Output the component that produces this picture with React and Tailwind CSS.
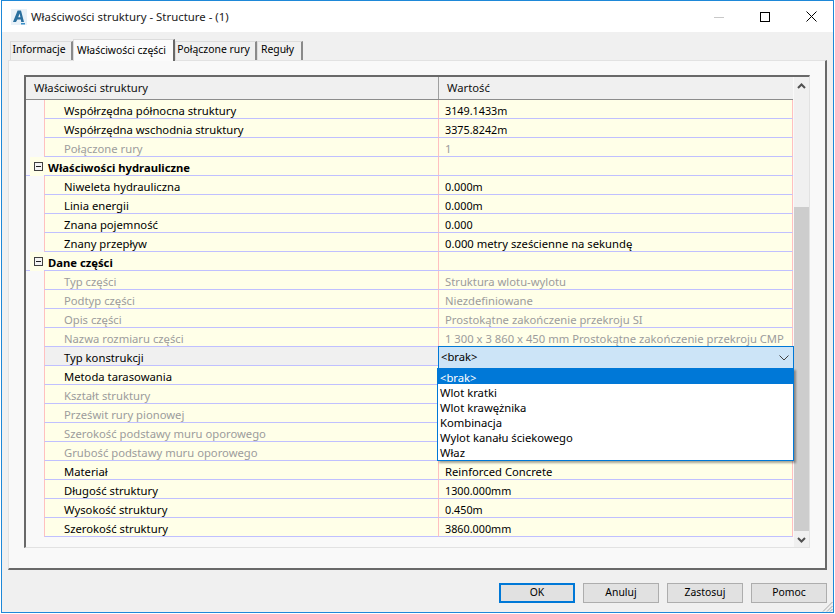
const LABEL_FONT = "font-['Noto_Sans','Open_Sans',sans-serif]";

const rows = [
  { k: "Współrzędna północna struktury", v: "3149.1433m", num: true },
  { k: "Współrzędna wschodnia struktury", v: "3375.8242m", num: true },
  { k: "Połączone rury", v: "1", dim: true },
  { section: "Właściwości hydrauliczne" },
  { k: "Niweleta hydrauliczna", v: "0.000m", num: true },
  { k: "Linia energii", v: "0.000m", num: true },
  { k: "Znana pojemność", v: "0.000", num: true },
  { k: "Znany przepływ", v: "0.000 metry sześcienne na sekundę" },
  { section: "Dane części" },
  { k: "Typ części", v: "Struktura wlotu-wylotu", dim: true },
  { k: "Podtyp części", v: "Niezdefiniowane", dim: true },
  { k: "Opis części", v: "Prostokątne zakończenie przekroju SI", dim: true },
  { k: "Nazwa rozmiaru części", v: "1 300 x 3 860 x 450 mm Prostokątne zakończenie przekroju CMP", dim: true },
  { k: "Typ konstrukcji", v: "", active: true },
  { k: "Metoda tarasowania", v: "" },
  { k: "Kształt struktury", v: "", dim: true },
  { k: "Prześwit rury pionowej", v: "", dim: true },
  { k: "Szerokość podstawy muru oporowego", v: "", dim: true },
  { k: "Grubość podstawy muru oporowego", v: "", dim: true },
  { k: "Materiał", v: "Reinforced Concrete" },
  { k: "Długość struktury", v: "1300.000mm", num: true },
  { k: "Wysokość struktury", v: "0.450m", num: true },
  { k: "Szerokość struktury", v: "3860.000mm", num: true },
];

const options = ["<brak>", "Wlot kratki", "Wlot krawężnika", "Kombinacja", "Wylot kanału ściekowego", "Właz"];

function Row({ r }) {
  if (r.section) {
    return (
      <div className="flex h-[19px] border-b border-[#c0c0ff]">
        <div className="w-[4px] shrink-0" />
        <div className="w-[14px] shrink-0 bg-[#ffffe8] flex items-center justify-end pr-[1px] -mb-px">
          <div className="w-[9px] h-[9px] border border-[#404040] bg-[#f4f4f4] relative flex items-center justify-center">
            <div className="w-[5px] h-px bg-[#202020]" />
          </div>
        </div>
        <div className="w-[395px] shrink-0 bg-[#ffffe8] border-r border-[#ffc0c0] pl-[4px] font-bold text-black leading-[21px]">{r.section}</div>
        <div className="flex-1 bg-[#ffffe8] border-r border-[#ffc0c0]" />
      </div>
    );
  }
  const color = r.dim ? "text-[#9c9c9c]" : "text-black";
  return (
    <div className="flex h-[19px]">
      <div className="w-[18px] shrink-0" />
      <div className={`w-[395px] shrink-0 border-l border-l-[#ffc0c0] border-r border-r-[#ffc0c0] border-b border-b-[#c0c0ff] pl-[19px] leading-[21px] ${r.active ? "bg-[#f0f0f0]" : "bg-[#ffffe8]"} ${color}`}>{r.k}</div>
      <div className={`flex-1 bg-[#ffffe8] border-r border-[#ffc0c0] border-b border-b-[#c0c0ff] pl-[6px] leading-[21px] whitespace-nowrap ${r.num ? "text-[10.8px]" : ""} ${color}`}>{r.v}</div>
    </div>
  );
}

function Tab({ label, active, w }) {
  return active ? (
    <div className={`${w} h-[22px] bg-[#fbfbfb] border-t border-l border-[#dcdcdc] border-r-2 border-r-[#696969] relative -mb-px z-10 text-center pr-[4px] text-[10.4px] leading-[20px] text-black whitespace-nowrap`}>{label}</div>
  ) : (
    <div className={`${w} h-[19px] bg-[#f0f0f0] border-t border-l border-[#dcdcdc] border-r-2 border-r-[#8a8a8a] text-center pr-[4px] text-[10.4px] leading-[15px] text-black whitespace-nowrap`}>{label}</div>
  );
}

function Btn({ label, primary }) {
  return (
    <div className={`w-[76px] h-[20px] bg-[#e1e1e1] flex items-center justify-center text-[10.4px] text-black ${primary ? "border-2 border-[#0078d7]" : "border border-[#adadad]"}`}>{label}</div>
  );
}

export default function App() {
  return (
    <div className={`w-[835px] h-[614px] bg-white pl-px pr-px pb-px text-[11.25px] ${LABEL_FONT}`}>
      <div className="h-full border border-[#1e88d8] bg-[#f0f0f0] flex flex-col relative overflow-hidden">
        <div className="h-[31px] shrink-0 bg-white flex items-center pl-[9px] pr-[16px]">
          <svg width="16" height="16" viewBox="0 0 16 16" className="shrink-0">
            <rect x="0" y="0" width="16" height="16" fill="#d6e6f2" opacity="0.55" />
            <path d="M2 13 L6.6 1.5 H10 L13 13 H10.2 L9.8 10.5 H6.4 L5 13 Z M7.2 8.3 H9.4 L8.6 4.5 Z" fill="#2a6f9e" fillRule="evenodd" />
            <rect x="10" y="14" width="4" height="1.5" fill="#3a8fc8" />
          </svg>
          <div className="ml-[4px] text-[11.4px] text-[#1a1a1a]">Właściwości struktury - Structure - (1)</div>
          <div className="ml-auto flex items-center">
            <svg width="10" height="10" viewBox="0 0 10 10" className="mr-[36px]"><path d="M0 5.5 H10" stroke="#c8c8c8" /></svg>
            <svg width="10" height="10" viewBox="0 0 10 10" className="mr-[36px]"><rect x="0.5" y="0.5" width="9" height="9" fill="none" stroke="#000" /></svg>
            <svg width="11" height="11" viewBox="0 0 11 11"><path d="M0.5 0.5 L10.5 10.5 M10.5 0.5 L0.5 10.5" stroke="#000" /></svg>
          </div>
        </div>

        <div className="flex-1 pl-[6px] pr-[6px] pt-[7px] flex flex-col">
          <div className="flex items-end pl-[2px] h-[21px] relative z-10">
            <Tab label="Informacje" w="w-[63px]" />
            <Tab label="Właściwości części" active w="w-[102px]" />
            <Tab label="Połączone rury" w="w-[82px]" />
            <Tab label="Reguły" w="w-[46px]" />
          </div>

          <div className="h-[510px] bg-[#f9f9f9] border-t border-l border-[#e2e2e2] border-r-2 border-r-[#696969] border-b-2 border-b-[#696969] pt-[14px] pl-[15px] pr-[15px]">
            <div className="relative h-[473px] border-t-2 border-l-2 border-[#696969] border-r border-r-[#e2e2e2] border-b border-b-[#e2e2e2] flex">
              <div className="w-[767px] shrink-0">
                <div className="h-[23px] bg-[#f0f0f0] border-b border-[#8c8c8c] flex">
                  <div className="w-[413px] shrink-0 pl-[8px] border-r border-[#a0a0a0] leading-[22px] text-[#111]">Właściwości struktury</div>
                  <div className="pl-[8px] leading-[22px] text-[#111]">Wartość</div>
                </div>
                {rows.map((r, i) => <Row key={i} r={r} />)}
              </div>
              <div className="w-[15px] shrink-0 ml-[1px] bg-[#f0f0f0] flex flex-col items-center">
                <svg width="9" height="6" viewBox="0 0 9 6" className="mt-[6px]"><path d="M1 5 L4.5 1.5 L8 5" fill="none" stroke="#505050" strokeWidth="2" /></svg>
                <div className="mt-[118px] w-full h-[324px] bg-[#cdcdcd]" />
                <svg width="9" height="6" viewBox="0 0 9 6" className="mt-[6px]"><path d="M1 1 L4.5 4.5 L8 1" fill="none" stroke="#505050" strokeWidth="2" /></svg>
              </div>

              <div className="absolute left-[411px] top-[269px] w-[357px] z-20">
                <div className="h-[23px] ml-px bg-[#cce4f7] border border-[#0078d7] flex items-center justify-between pl-[2px] pr-[4px] text-black">
                  <span>&lt;brak&gt;</span>
                  <svg width="10" height="6" viewBox="0 0 10 6"><path d="M0.5 0.5 L5 5 L9.5 0.5" fill="none" stroke="#404040" /></svg>
                </div>
                <div className="h-[93px] -mt-px bg-white border border-[#0078d7] shadow-[2px_2px_2px_rgba(0,0,0,0.35)]">
                  {options.map((o, i) => (
                    <div key={o} className={`h-[15px] leading-[17px] pl-[2px] ${i === 0 ? "bg-[#0078d7] text-white" : "text-black"}`}>{o}</div>
                  ))}
                </div>
              </div>
            </div>
          </div>

          <div className="flex justify-end gap-[8px] mt-[13px]">
            <Btn label="OK" primary />
            <Btn label="Anuluj" />
            <Btn label="Zastosuj" />
            <Btn label="Pomoc" />
          </div>
        </div>

        <svg width="12" height="12" viewBox="0 0 12 12" className="absolute right-0 bottom-0">
          <path d="M11.5 2 L2 11.5 M11.5 6 L6 11.5 M11.5 9 L9 11.5" stroke="#a8a8a8" />
        </svg>
      </div>
    </div>
  );
}
